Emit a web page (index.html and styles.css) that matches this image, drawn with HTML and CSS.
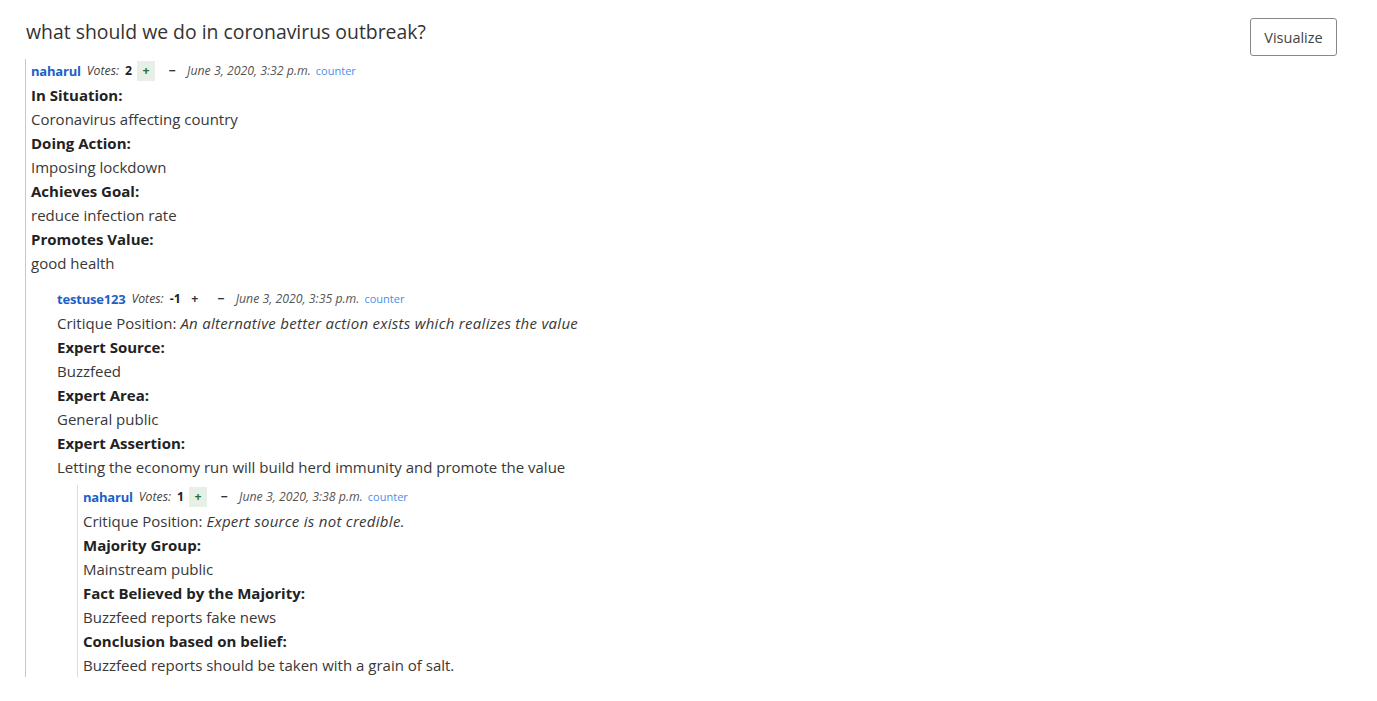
FILE: index.html
```html
<!DOCTYPE html>
<html>
<head>
<meta charset="utf-8">
<link rel="stylesheet" href="styles.css">
</head>
<body>
<div class="page">
  <div class="topbar">
    <h1 class="title">what should we do in coronavirus outbreak?</h1>
    <button class="btn">Visualize</button>
  </div>
  <div class="thread lvl1">
    <div class="meta"><a class="user">naharul</a> <i class="votes">Votes:</i> <b class="count">2</b> <span class="vote plus active">+</span> <span class="vote minus">&minus;</span> <i class="date">June 3, 2020, 3:32 p.m.</i> <a class="counter">counter</a></div>
    <div class="label">In Situation:</div>
    <div class="value">Coronavirus affecting country</div>
    <div class="label">Doing Action:</div>
    <div class="value">Imposing lockdown</div>
    <div class="label">Achieves Goal:</div>
    <div class="value">reduce infection rate</div>
    <div class="label">Promotes Value:</div>
    <div class="value">good health</div>

    <div class="thread lvl2">
      <div class="meta"><a class="user">testuse123</a> <i class="votes">Votes:</i> <b class="count">-1</b> <span class="vote plus">+</span> <span class="vote minus">&minus;</span> <i class="date">June 3, 2020, 3:35 p.m.</i> <a class="counter">counter</a></div>
      <div class="value">Critique Position: <i class="position">An alternative better action exists which realizes the value</i></div>
      <div class="label">Expert Source:</div>
      <div class="value">Buzzfeed</div>
      <div class="label">Expert Area:</div>
      <div class="value">General public</div>
      <div class="label">Expert Assertion:</div>
      <div class="value">Letting the economy run will build herd immunity and promote the value</div>

      <div class="thread lvl3">
        <div class="meta"><a class="user">naharul</a> <i class="votes">Votes:</i> <b class="count">1</b> <span class="vote plus active">+</span> <span class="vote minus">&minus;</span> <i class="date">June 3, 2020, 3:38 p.m.</i> <a class="counter">counter</a></div>
        <div class="value">Critique Position: <i class="position">Expert source is not credible.</i></div>
        <div class="label">Majority Group:</div>
        <div class="value">Mainstream public</div>
        <div class="label">Fact Believed by the Majority:</div>
        <div class="value">Buzzfeed reports fake news</div>
        <div class="label">Conclusion based on belief:</div>
        <div class="value">Buzzfeed reports should be taken with a grain of salt.</div>
      </div>
    </div>
  </div>
</div>
</body>
</html>
```

FILE: styles.css
```css
html, body {
  margin: 0;
  padding: 0;
  background: #fff;
}
body {
  font-family: "Open Sans", "Noto Sans", sans-serif;
  color: #333;
  font-size: 15px;
}
.page {
  padding: 18px 40px 0 25px;
}
.topbar {
  display: flex;
  justify-content: space-between;
  align-items: flex-start;
}
.title {
  margin: 2px 0 0 1px;
  font-size: 19.4px;
  font-weight: 400;
  color: #333;
  line-height: 24px;
}
.btn {
  font-family: inherit;
  font-size: 14.5px;
  color: #444;
  background: #fff;
  border: 1px solid #888;
  border-radius: 3px;
  width: 87px;
  height: 38px;
  padding: 0;
}
.thread {
  line-height: 24px;
}
.lvl1 {
  margin-top: 3px;
  border-left: 1px solid #c8c8c8;
  padding-left: 5px;
}
.lvl2 {
  margin-left: 26px;
  margin-top: 12px;
}
.lvl3 {
  margin-left: 20px;
  margin-top: 6px;
  border-left: 1px solid #ddd;
  padding-left: 5px;
}
.meta {
  font-size: 12.3px;
  color: #333;
  display: flex;
  align-items: center;
  gap: 5px;
  height: 24px;
}
.user {
  color: #1d5fc9;
  font-weight: 700;
  font-size: 13px;
  letter-spacing: -0.2px;
  margin-right: 1px;
}
.votes {
  color: #444;
}
.count {
  color: #222;
  margin-left: 1px;
}
.vote {
  display: inline-block;
  width: 18px;
  height: 20px;
  line-height: 20px;
  text-align: center;
  font-weight: 700;
  color: #333;
}
.vote.active {
  background: #e6f0e6;
  color: #2c6a3a;
}
.minus {
  margin-left: 3px;
  margin-right: 1px;
}
.date {
  color: #555;
}
.counter {
  color: #4a8ee8;
  font-size: 11px;
}
.position {
  letter-spacing: 0.28px;
}
.label {
  font-weight: 700;
  color: #222;
}
.value {
  color: #383838;
}
```
